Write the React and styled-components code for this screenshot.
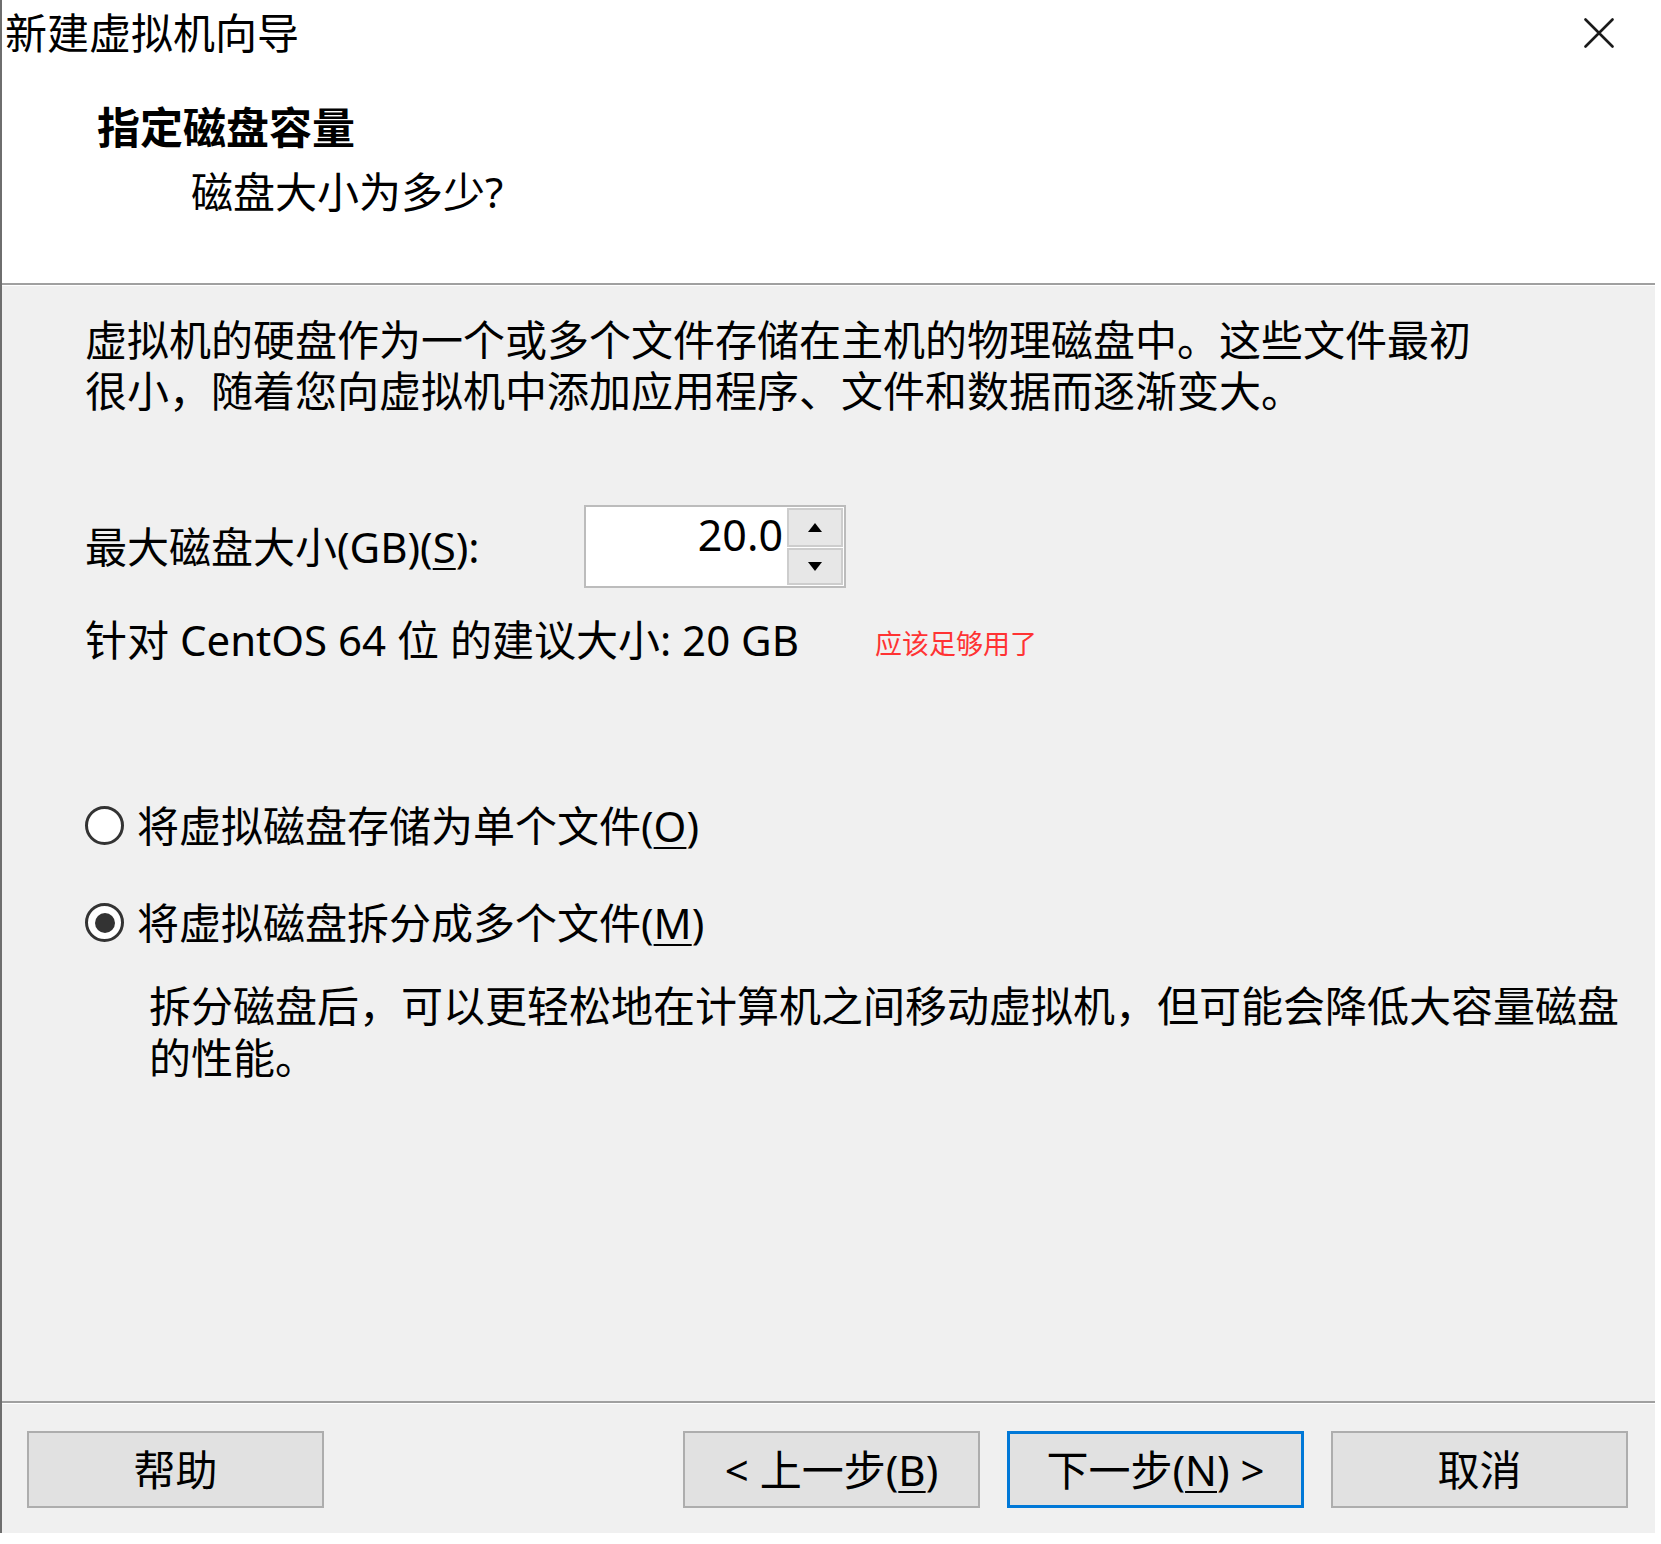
import React from "react";
import styled, { createGlobalStyle } from "styled-components";

const GlobalStyle = createGlobalStyle`
  html, body {
    margin: 0;
    padding: 0;
    background: #fff;
  }
  body {
    font-family: "Noto Sans", "Noto Sans CJK SC", sans-serif;
    color: #000;
  }
`;

const Window = styled.div`
  width: 1655px;
  height: 1533px;
  box-sizing: border-box;
  border-left: 2px solid #6e6e6e;
  background: #f0f0f0;
  display: flex;
  flex-direction: column;
`;

const Header = styled.div`
  height: 285px;
  box-sizing: border-box;
  background: #fff;
  border-bottom: 2px solid #a0a0a0;
`;

const TitleBar = styled.div`
  height: 66px;
  display: flex;
  align-items: center;
  justify-content: space-between;
  padding: 0 41px 0 3px;
`;

const WindowTitle = styled.div`
  font-size: 42px;
  line-height: 66px;
`;

const CloseButton = styled.div`
  width: 30px;
  height: 30px;
  display: flex;
  cursor: pointer;
`;

const Heading = styled.div`
  margin: 36px 0 0 95px;
  font-size: 43px;
  font-weight: bold;
  line-height: 52px;
`;

const SubHeading = styled.div`
  margin: 12px 0 0 189px;
  font-size: 42px;
  line-height: 52px;
`;

const Body = styled.div`
  flex: 1;
  border-top: 1px solid #fff;
  padding-left: 83px;
`;

const Paragraph = styled.div`
  margin-top: 28px;
  max-width: 1400px;
  font-size: 42px;
  line-height: 51px;
`;

const SizeRow = styled.div`
  margin-top: 89px;
  display: flex;
  align-items: center;
`;

const Label = styled.div`
  width: 499px;
  font-size: 42px;
  line-height: 51px;
`;

const Key = styled.u`
  text-decoration-thickness: 2px;
  text-underline-offset: 5px;
`;

const SpinBox = styled.div`
  width: 262px;
  height: 83px;
  box-sizing: border-box;
  border: 2px solid #bcbcbc;
  background: #fff;
  display: flex;
`;

const SpinValue = styled.div`
  flex: 1;
  align-self: flex-start;
  padding: 6px 4px 0 0;
  text-align: right;
  font-size: 43px;
  line-height: 43px;
`;

const SpinButtons = styled.div`
  width: 56px;
  margin: 1px 1px 1px 0;
  display: flex;
  flex-direction: column;
`;

const SpinButton = styled.div`
  height: ${(p) => p.$h}px;
  box-sizing: border-box;
  border: 2px solid #cdcdcd;
  background: #e7e7e7;
  display: flex;
  align-items: center;
  justify-content: center;
  & + & {
    margin-top: 1px;
  }
`;

const Arrow = styled.div`
  width: 0;
  height: 0;
  border-left: 7px solid transparent;
  border-right: 7px solid transparent;
  ${(p) =>
    p.$up ? "border-bottom: 9px solid #000;" : "border-top: 9px solid #000;"}
`;

const RecRow = styled.div`
  margin-top: 26px;
  display: flex;
  align-items: center;
  font-size: 42px;
  line-height: 51px;
`;

const Note = styled.span`
  margin-left: 76px;
  padding-top: 6px;
  font-family: "Noto Sans CJK SC", sans-serif;
  font-size: 27px;
  line-height: 30px;
  color: #ff3333;
`;

const RadioRow = styled.label`
  margin-top: ${(p) => p.$mt}px;
  display: flex;
  align-items: center;
  gap: 13px;
  font-size: 42px;
  line-height: 51px;
  cursor: pointer;
`;

const RadioCircle = styled.span`
  width: 39px;
  height: 39px;
  box-sizing: border-box;
  border: 3px solid #333;
  border-radius: 50%;
  background: #fff;
  display: flex;
  align-items: center;
  justify-content: center;
  &::after {
    content: "";
    width: 20px;
    height: 20px;
    border-radius: 50%;
    background: #333;
    display: ${(p) => (p.$checked ? "block" : "none")};
  }
`;

const Description = styled.div`
  margin: 32px 0 0 64px;
  max-width: 1480px;
  font-size: 42px;
  line-height: 52px;
`;

const Footer = styled.div`
  height: 132px;
  box-sizing: border-box;
  border-top: 2px solid #a0a0a0;
  padding: 27px 27px 0 25px;
  display: flex;
  gap: 27px;
  position: relative;
  &::before {
    content: "";
    position: absolute;
    left: 0;
    right: 0;
    top: 0;
    height: 1px;
    background: #fff;
  }
`;

const Spacer = styled.div`
  flex: 1;
`;

const Button = styled.div`
  width: 297px;
  height: 77px;
  box-sizing: border-box;
  margin-top: 1px;
  border: ${(p) => (p.$primary ? "3px solid #0078d7" : "2px solid #adadad")};
  background: #e1e1e1;
  display: flex;
  align-items: center;
  justify-content: center;
  font-size: 42px;
  line-height: 1;
  cursor: pointer;
`;

const App = () => {
  return (
    <>
      <GlobalStyle />
      <Window>
        <Header>
          <TitleBar>
            <WindowTitle>新建虚拟机向导</WindowTitle>
            <CloseButton>
              <svg width="30" height="30" viewBox="0 0 30 30">
                <path
                  d="M1.5 1.5 L28.5 28.5 M28.5 1.5 L1.5 28.5"
                  stroke="#1a1a1a"
                  strokeWidth="2.6"
                  strokeLinecap="round"
                />
              </svg>
            </CloseButton>
          </TitleBar>
          <Heading>指定磁盘容量</Heading>
          <SubHeading>磁盘大小为多少?</SubHeading>
        </Header>
        <Body>
          <Paragraph>
            虚拟机的硬盘作为一个或多个文件存储在主机的物理磁盘中。这些文件最初很小，随着您向虚拟机中添加应用程序、文件和数据而逐渐变大。
          </Paragraph>
          <SizeRow>
            <Label>
              最大磁盘大小(GB)(<Key>S</Key>):
            </Label>
            <SpinBox>
              <SpinValue>20.0</SpinValue>
              <SpinButtons>
                <SpinButton $h={39}>
                  <Arrow $up />
                </SpinButton>
                <SpinButton $h={37}>
                  <Arrow />
                </SpinButton>
              </SpinButtons>
            </SpinBox>
          </SizeRow>
          <RecRow>
            <span>针对 CentOS 64 位 的建议大小: 20 GB</span>
            <Note>应该足够用了</Note>
          </RecRow>
          <RadioRow $mt={135}>
            <RadioCircle />
            <span>
              将虚拟磁盘存储为单个文件(<Key>O</Key>)
            </span>
          </RadioRow>
          <RadioRow $mt={46}>
            <RadioCircle $checked />
            <span>
              将虚拟磁盘拆分成多个文件(<Key>M</Key>)
            </span>
          </RadioRow>
          <Description>
            拆分磁盘后，可以更轻松地在计算机之间移动虚拟机，但可能会降低大容量磁盘的性能。
          </Description>
        </Body>
        <Footer>
          <Button>帮助</Button>
          <Spacer />
          <Button>
            &lt; 上一步(<Key>B</Key>)
          </Button>
          <Button $primary>
            下一步(<Key>N</Key>) &gt;
          </Button>
          <Button>取消</Button>
        </Footer>
      </Window>
    </>
  );
};

export default App;
